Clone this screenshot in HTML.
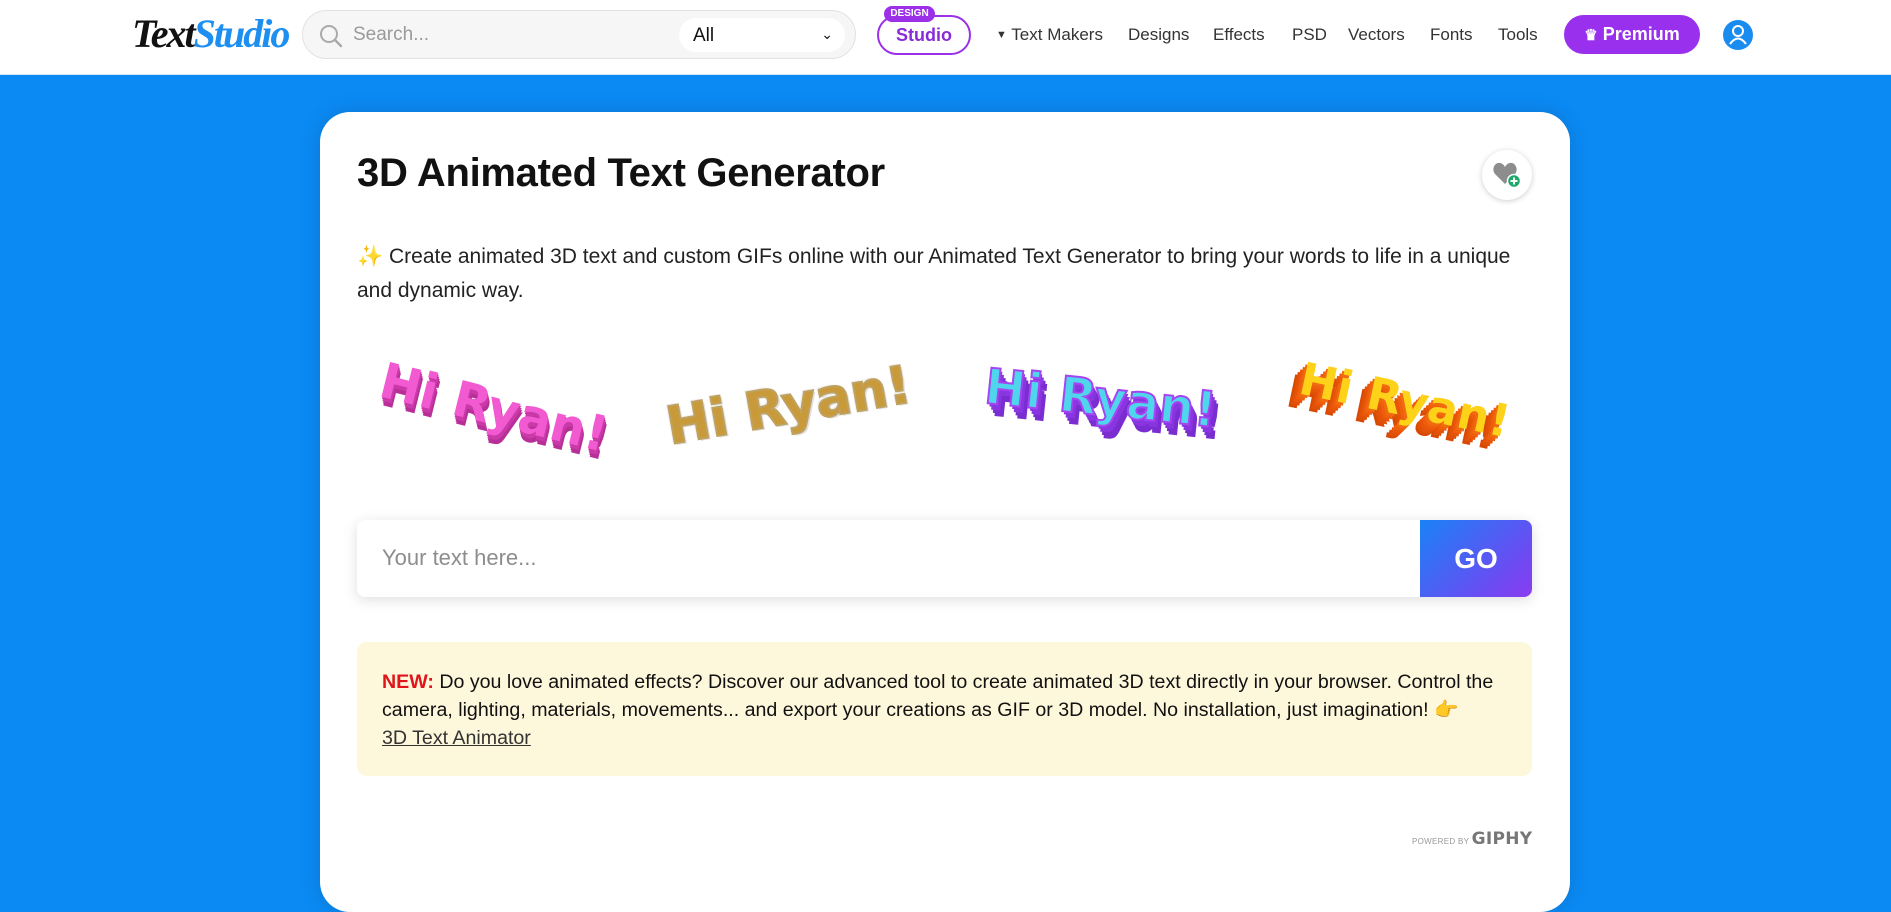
<!DOCTYPE html>
<html><head><meta charset="utf-8">
<style>
*{margin:0;padding:0;box-sizing:border-box}
body{width:1891px;height:873px;overflow:hidden;background:#0b8af4;font-family:"Liberation Sans",Arial,sans-serif;position:relative}
.hdr{position:absolute;left:0;top:0;width:1891px;height:75px;background:#fff;border-bottom:1px solid #cfe6fb}
.logo{position:absolute;left:132px;top:12px;font-family:"Liberation Serif",serif;font-style:italic;font-weight:bold;font-size:40px;letter-spacing:-2px;line-height:44px}
.search{position:absolute;left:302px;top:10px;width:554px;height:49px;border:1px solid #e2e2e2;border-radius:25px;background:#f6f6f6}
.search .ph{position:absolute;left:50px;top:13px;font-size:19px;color:#9a9a9a}
.sel{position:absolute;left:376px;top:7px;width:166px;height:34px;background:#fff;border-radius:17px;font-size:19px;color:#111;padding:7px 0 0 14px}
.sel .chev{position:absolute;right:12px;top:8px;font-size:14px}
.studio{position:absolute;left:877px;top:15px;width:94px;height:40px;border:2px solid #9b30e8;border-radius:20px;color:#8a2bd6;font-size:18px;font-weight:bold;text-align:center;line-height:36px;background:#fff}
.badge{position:absolute;left:884px;top:6px;width:51px;height:16px;background:#9b30e8;color:#fff;border-radius:8px;font-size:10px;font-weight:bold;text-align:center;line-height:16px}
.nav{position:absolute;top:25px;font-size:17px;color:#333}
.prem{position:absolute;left:1564px;top:15px;width:136px;height:39px;background:#9830ee;border-radius:20px;color:#fff;font-size:18px;font-weight:bold;line-height:39px;text-align:center}
.card{position:absolute;left:320px;top:112px;width:1250px;height:800px;background:#fff;border-radius:30px;box-shadow:0 0 20px rgba(0,0,0,.15)}
h1{position:absolute;left:357px;top:151px;font-size:40px;font-weight:bold;color:#111;letter-spacing:-.3px}
.heart{position:absolute;left:1482px;top:150px;width:50px;height:50px;border-radius:50%;background:#fff;box-shadow:0 1px 6px rgba(0,0,0,.2)}
.desc{position:absolute;left:357px;top:240px;width:1180px;font-size:21px;line-height:34px;color:#222}
.hr{position:absolute;font-family:"DejaVu Sans","Liberation Sans",sans-serif;font-weight:bold;white-space:nowrap}
.inp{position:absolute;left:357px;top:520px;width:1175px;height:77px;border-radius:8px;background:#fff;box-shadow:0 3px 14px rgba(0,0,0,.13);overflow:hidden}
.inp .ph{position:absolute;left:25px;top:25px;font-size:22px;color:#8d8d8d}
.go{position:absolute;right:0;top:0;width:112px;height:77px;background:linear-gradient(135deg,#1a82f7,#7346f2 80%,#8a3ef0);color:#fff;font-size:28px;font-weight:bold;text-align:center;line-height:77px}
.note{position:absolute;left:357px;top:642px;width:1175px;height:134px;background:#fdf7db;border-radius:10px;padding:26px 14px 26px 25px;font-size:19.6px;line-height:28px;color:#111}
.giphy{position:absolute;left:1412px;top:829px;font-size:8px;color:#999;letter-spacing:.3px}
.giphy b{font-size:17px;color:#777;font-family:"DejaVu Sans",sans-serif}
</style></head><body>
<div class="hdr">
 <div class="logo"><span style="color:#111">Text</span><span style="color:#1d8ff0">Studio</span></div>
 <div class="search">
  <svg style="position:absolute;left:15px;top:12px" width="26" height="26" viewBox="0 0 26 26"><circle cx="11" cy="11" r="8" fill="none" stroke="#aaa" stroke-width="2"/><line x1="17" y1="17" x2="23" y2="23" stroke="#aaa" stroke-width="2.4" stroke-linecap="round"/></svg>
  <div class="ph">Search...</div>
  <div class="sel">All<span class="chev">&#x2304;</span></div>
 </div>
 <div class="studio">Studio</div>
 <div class="badge">DESIGN</div>
 <div class="nav" style="left:996px"><span style="font-size:11px;position:relative;top:-2px">&#9660;</span> Text Makers</div>
 <div class="nav" style="left:1128px">Designs</div>
 <div class="nav" style="left:1213px">Effects</div>
 <div class="nav" style="left:1292px">PSD</div>
 <div class="nav" style="left:1348px">Vectors</div>
 <div class="nav" style="left:1430px">Fonts</div>
 <div class="nav" style="left:1498px">Tools</div>
 <div class="prem"><span style="font-size:15px">&#9819;</span> Premium</div>
 <svg style="position:absolute;left:1723px;top:20px" width="30" height="30" viewBox="0 0 30 30"><circle cx="15" cy="15" r="15" fill="#1a8cf0"/><circle cx="15" cy="11" r="5" fill="none" stroke="#fff" stroke-width="2"/><path d="M7 24 Q15 13 23 24" fill="none" stroke="#fff" stroke-width="2"/></svg>
</div>

<div class="card"></div>
<h1>3D Animated Text Generator</h1>
<div class="heart"><svg style="position:absolute;left:11px;top:12px" width="30" height="28" viewBox="0 0 30 28"><path d="M12 22 L2 12 C-2 7 2 0 7 1 C9 1 11 3 12 5 C13 3 15 1 17 1 C22 0 26 7 22 12 Z" fill="#8d8d8d"/><circle cx="21" cy="19" r="6.5" fill="#1ea86b" stroke="#fff" stroke-width="1.5"/><path d="M21 15.5v7M17.5 19h7" stroke="#fff" stroke-width="2"/></svg></div>
<div class="desc"><span style="color:#f4a740">&#10024;</span> Create animated 3D text and custom GIFs online with our Animated Text Generator to bring your words to life in a unique and dynamic way.</div>

<div class="hr" style="left:388px;top:352px;font-size:49px;color:#f25ad2;transform:rotate(14deg);transform-origin:left top;text-shadow:1px 2px 0 #c93aa8,2px 4px 0 #c93aa8,3px 6px 0 #b82f98,4px 8px 0 #b82f98">Hi Ryan!</div>
<div class="hr" style="left:662px;top:398px;font-size:52px;color:#c99a3a;transform:rotate(-10deg);transform-origin:left top;-webkit-text-stroke:2px #bfa160;text-shadow:0 0 3px #fff,2px 2px 0 #ddd,-2px -2px 0 #eee">Hi Ryan!</div>
<div class="hr" style="left:988px;top:358px;font-size:49px;color:#4fd6ec;transform:rotate(6deg);transform-origin:left top;-webkit-text-stroke:2px #a545f2;text-shadow:2px 3px 0 #8a36e0,4px 6px 0 #8a36e0,6px 9px 0 #7a2dd0,8px 12px 0 #7a2dd0">Hi Ryan!</div>
<div class="hr" style="left:1306px;top:352px;font-size:45px;color:#ffd21a;transform:rotate(12deg);transform-origin:left top;text-shadow:-2px 3px 0 #f06a10,-4px 6px 0 #ee5e0c,-6px 9px 0 #e85508,-8px 12px 0 #e05006,-10px 15px 0 #d84a04">Hi Ryan!</div>

<div class="inp"><div class="ph">Your text here...</div><div class="go">GO</div></div>

<div class="note"><b style="color:#e0141a;font-weight:bold">NEW:</b> Do you love animated effects? Discover our advanced tool to create animated 3D text directly in your browser. Control the camera, lighting, materials, movements... and export your creations as GIF or 3D model. No installation, just imagination! <span style="color:#f4a740">&#128073;</span><br><span style="text-decoration:underline;color:#333">3D Text Animator</span></div>

<div class="giphy">POWERED BY <b>GIPHY</b></div>
</body></html>
